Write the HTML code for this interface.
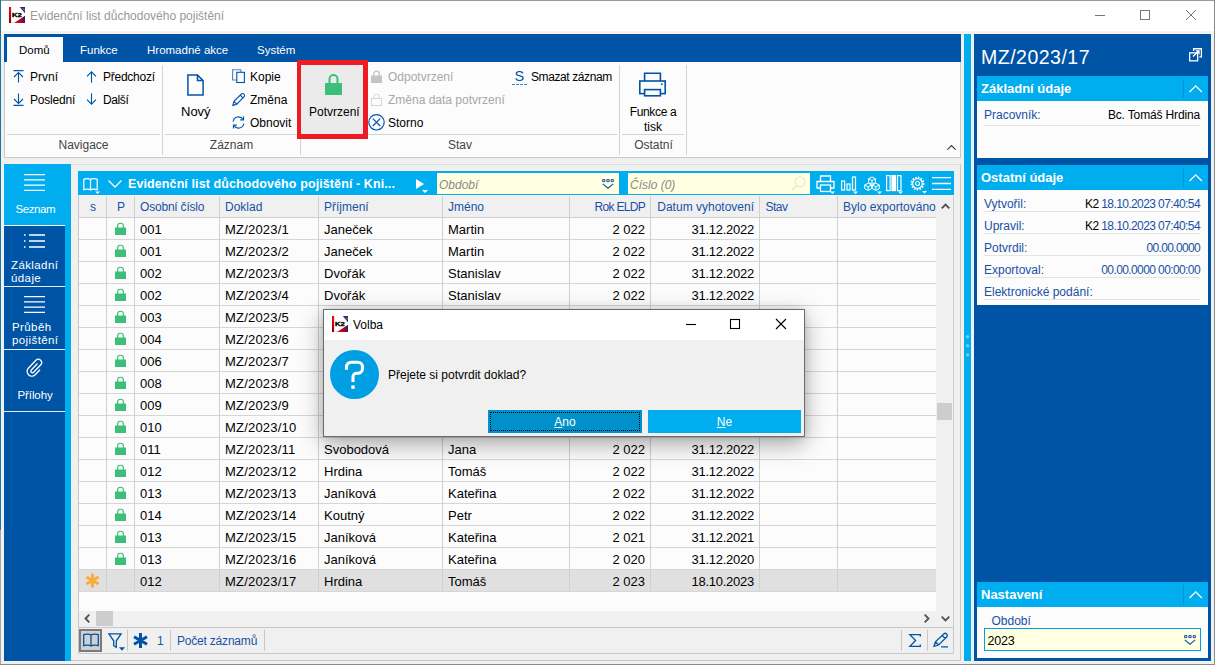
<!DOCTYPE html>
<html lang="cs"><head><meta charset="utf-8"><title>Evidenční list důchodového pojištění</title>
<style>
*{box-sizing:border-box;margin:0;padding:0}
html,body{width:1215px;height:665px;overflow:hidden;background:#f0f0f0}
body{font-family:"Liberation Sans",sans-serif;font-size:12px;color:#000;position:relative}
.a{position:absolute}
.t{position:absolute;white-space:nowrap;line-height:14px}
svg{position:absolute;overflow:visible}
/* window */
#win{position:absolute;left:0;top:0;width:1215px;height:665px;background:#f0f0f0}
#tbar{left:1px;top:1px;width:1213px;height:30px;background:#fff}
#tline{left:1px;top:31px;width:1213px;height:3px;background:#f4f3f2}
/* ribbon */
#tabs{left:4px;top:34px;width:957px;height:28px;background:#0054a6}
#tab1{left:7px;top:37px;width:56px;height:25px;background:#fcfcfc}
#rib{left:4px;top:62px;width:957px;height:96px;background:#fcfcfc;border:1px solid #c9c9c9;border-top:0}
.vs{position:absolute;width:1px;background:#d4d4d4;top:65px;height:90px}
.hs{position:absolute;height:1px;background:#d4d4d4;top:134px}
.gl{position:absolute;white-space:nowrap;line-height:14px;top:138px;color:#444;text-align:center}
.dis{color:#a8a8a8}
/* left nav */
#nav{left:4px;top:164px;width:67px;height:497px;background:#00adef}
#navd{left:4px;top:226px;width:61px;height:435px;background:#0054a6}
.nt{position:absolute;color:#fff;white-space:nowrap;line-height:13px;font-size:11.5px;letter-spacing:.4px}
/* table */
#thead{left:78px;top:171px;width:876px;height:25px;background:#00adef}
#tbl{left:78px;top:195px;width:859px;height:433px;background:#fcfcfc;border-left:1px solid #c8c8c8}
#hrow{left:79px;top:196px;width:857px;height:22px;background:#f0f0f0;border-bottom:1px solid #d0d0d0}
.h{position:absolute;top:4px;white-space:nowrap;line-height:14px;color:#1950a5;font-size:12px}
.row{position:absolute;left:79px;width:857px;height:22px;border-bottom:1px solid #d6d6d6;font-size:13px}
.row.sel{background:#e0e0e0}
.c{position:absolute;top:4px;white-space:nowrap;line-height:15px}
.c.r{text-align:right}
.lk{position:relative;top:0}
.star{color:#f7a233;font-size:15px;top:3px}
.cl{position:absolute;top:196px;width:1px;height:396px;background:#d0d0d0}
/* right panel */
#rp{left:974px;top:34px;width:237px;height:627px;background:#0054a6}
.sh{position:absolute;left:977px;width:231px;height:25px;background:#00adef}
.sb{position:absolute;left:977px;width:231px;background:#fcfcfc}
.st{position:absolute;left:4px;top:5px;color:#fff;font-weight:bold;font-size:13px;line-height:15px;white-space:nowrap}
.lb{position:absolute;left:984px;color:#1950a5;white-space:nowrap;line-height:14px}
.vl{position:absolute;right:15px;white-space:nowrap;line-height:14px;text-align:right}
.ul{position:absolute;left:984px;width:216px;height:1px;background:#e4e4e4}
/* dialog */
#dlg{left:323px;top:309px;width:482px;height:128px;background:#f0f0f0;border:1px solid #6b6b6b;box-shadow:0 7px 22px rgba(0,0,0,.34),0 0 7px rgba(0,0,0,.12)}
#dtb{left:324px;top:310px;width:480px;height:30px;background:#fff}
</style></head><body>
<div id="win">
<div class="a" style="left:0;top:0;width:1215px;height:1px;background:#9a9a9a"></div>
<div class="a" style="left:0;top:0;width:1px;height:530px;background:#1a769a"></div><div class="a" style="left:0;top:530px;width:1px;height:135px;background:#a4a4a4"></div>
<div class="a" style="left:1214px;top:0;width:1px;height:665px;background:#8a8a8a"></div>
<div class="a" style="left:0;top:664px;width:1215px;height:1px;background:#8a8a8a"></div>
<div class="a" id="tbar"></div><div class="a" id="tline"></div>
<!-- app icon -->
<svg style="left:9px;top:7px" width="16" height="16" viewBox="0 0 16 16"><defs><linearGradient id="g1a" x1="0" y1="0" x2="0" y2="1"><stop offset="0" stop-color="#ff0010"/><stop offset="1" stop-color="#8c0012"/></linearGradient><linearGradient id="g1b" x1="0" y1="0" x2="1" y2="0"><stop offset="0" stop-color="#e8001c"/><stop offset=".6" stop-color="#c00020"/><stop offset="1" stop-color="#2a2450"/></linearGradient></defs><rect width="16" height="16" fill="#fff"/><rect x="0" y="0" width="2.100" height="16" fill="url(#g1a)"/><path d="M10.800 0H16v6.200z" fill="#2c2a5a"/><path d="M13.300 1.500l2.200 0v2.600z" fill="#9aa0c4" opacity=".7"/><path d="M16 16H5l6.500-4.200L16 8.800z" fill="url(#g1b)"/><path d="M2.100 16h3.400l-1.200-1z" fill="#a8b4d8" opacity=".7"/><text x="3.100" y="9.900" font-family="Liberation Sans,sans-serif" font-size="5.800" font-weight="bold" fill="#000" textLength="9.800" lengthAdjust="spacingAndGlyphs" stroke="#000" stroke-width=".35">K2</text></svg>
<div class="t" style="left:30px;top:9px;color:#999;font-size:12px">Evidenční list důchodového pojištění</div>
<!-- window controls -->
<svg style="left:1095px;top:10px" width="110" height="12" viewBox="0 0 110 12" fill="none" stroke="#777" stroke-width="1"><path d="M0 5.5h10"/><rect x="45.500" y="0.500" width="9" height="9"/><path d="M91 0l10 10M101 0l-10 10"/></svg>

<!-- ribbon tabs -->
<div class="a" id="tabs"></div><div class="a" id="tab1"></div>
<div class="t" style="left:19px;top:43px;font-size:11.5px">Domů</div>
<div class="t" style="left:80px;top:43px;color:#fff;font-size:11.5px">Funkce</div>
<div class="t" style="left:147px;top:43px;color:#fff;font-size:11.5px">Hromadné akce</div>
<div class="t" style="left:257px;top:43px;color:#fff;font-size:11.5px">Systém</div>
<div class="a" id="rib"></div>
<!-- group separators -->
<div class="vs" style="left:162px"></div><div class="vs" style="left:300px"></div><div class="vs" style="left:619px"></div><div class="vs" style="left:686px"></div>
<div class="hs" style="left:7px;width:153px"></div><div class="hs" style="left:165px;width:133px"></div><div class="hs" style="left:303px;width:314px"></div><div class="hs" style="left:622px;width:62px"></div>
<div class="gl" style="left:7px;width:153px">Navigace</div><div class="gl" style="left:165px;width:133px">Záznam</div><div class="gl" style="left:303px;width:314px">Stav</div><div class="gl" style="left:622px;width:63px">Ostatní</div>
<!-- Navigace -->
<svg style="left:13px;top:70px" width="11" height="13" viewBox="0 0 11 13" fill="none" stroke="#0054a6" stroke-width="1.1"><path d="M0.5 .6h10M5.5 2.5v10M1 7l4.5-4.5L10 7"/></svg>
<div class="t" style="left:30px;top:70px">První</div>
<svg style="left:13px;top:93px" width="11" height="13" viewBox="0 0 11 13" fill="none" stroke="#0054a6" stroke-width="1.1"><path d="M0.5 12.4h10M5.5 .5v10M1 6l4.5 4.5L10 6"/></svg>
<div class="t" style="left:30px;top:93px;letter-spacing:-.2px">Poslední</div>
<svg style="left:86px;top:71px" width="11" height="12" viewBox="0 0 11 12" fill="none" stroke="#0054a6" stroke-width="1.1"><path d="M5.5 .8v11M1 5.3L5.5 .8 10 5.3"/></svg>
<div class="t" style="left:103px;top:70px;letter-spacing:-.25px">Předchozí</div>
<svg style="left:86px;top:93px" width="11" height="12" viewBox="0 0 11 12" fill="none" stroke="#0054a6" stroke-width="1.1"><path d="M5.5 .2v11M1 6.7l4.500 4.500L10 6.700"/></svg>
<div class="t" style="left:103px;top:93px;letter-spacing:-.4px">Další</div>
<!-- Záznam -->
<svg style="left:187px;top:73.500px" width="17" height="22" viewBox="0 0 17 22" fill="none" stroke="#0054a6" stroke-width="1.500"><path d="M.9 1h9.600l5.600 5.600v14.500H.9zM10.500 1v5.600h5.600"/></svg>
<div class="t" style="left:181px;top:105px;font-size:13px">Nový</div>
<svg style="left:232px;top:69px" width="13" height="14" viewBox="0 0 13 14" fill="none" stroke="#0054a6" stroke-width="1.100"><path d="M4.600 11H.6V.8h8.200V3" stroke="#4a86c5"/><rect x="4.800" y="3.300" width="7.600" height="10.200"/></svg>
<div class="t" style="left:250px;top:70px">Kopie</div>
<svg style="left:232px;top:93px" width="13" height="13" viewBox="0 0 13 13" fill="none" stroke="#0054a6" stroke-width="1.100"><path d="M.8 12.400l1.200-4L9.700 .8a1.900 1.900 0 0 1 2.600 2.600L4.800 11.200zM8.300 2.200l2.600 2.600M2 8.400l2.800 2.800"/></svg>
<div class="t" style="left:250px;top:93px">Změna</div>
<svg style="left:232px;top:116px" width="13" height="13" viewBox="0 0 13 13" fill="none" stroke="#0054a6" stroke-width="1.2"><path d="M1.200 5.500A5.300 5.300 0 0 1 11 3.500M11.800 7.500A5.300 5.300 0 0 1 2 9.500"/><path d="M11.500 .5v3.300H8.200M1.500 12.500V9.200h3.300"/></svg>
<div class="t" style="left:250px;top:116px">Obnovit</div>
<!-- Potvrzení -->
<div class="a" style="left:297px;top:60px;width:71px;height:79px;background:#ebebeb;border:5px solid #ed1c24;border-left-width:4.5px"></div>
<svg style="left:325px;top:74px" width="17" height="21" viewBox="0 0 17 21"><path d="M4.500 10V5a4 4 0 0 1 8 0V10" fill="none" stroke="#3cbf78" stroke-width="2"/><rect x="0" y="9" width="17" height="12" fill="#3cbf78"/></svg>
<div class="t" style="left:309px;top:105px">Potvrzení</div>
<!-- Stav -->
<svg style="left:371px;top:70px" width="11" height="13" viewBox="0 0 11 13"><path d="M2.700 6V4a2.800 2.800 0 0 1 5.600 0v2" fill="none" stroke="#c4c4c4" stroke-width="1.3"/><rect x="0" y="5.500" width="11" height="7.500" fill="#c4c4c4"/></svg>
<div class="t dis" style="left:388px;top:70px">Odpotvrzení</div>
<svg style="left:371px;top:93px" width="11" height="13" viewBox="0 0 11 13" fill="none" stroke="#d4d4d4" stroke-width="1"><path d="M2.700 6V4a2.800 2.800 0 0 1 5.600 0v2"/><rect x=".5" y="5.500" width="10" height="7"/></svg>
<div class="t dis" style="left:388px;top:93px">Změna data potvrzení</div>
<svg style="left:368px;top:114px" width="17" height="17" viewBox="0 0 17 17" fill="none" stroke="#0054a6" stroke-width="1.2"><circle cx="8.500" cy="8.300" r="7.700"/><path d="M4.800 4.600l7.400 7.400M12.200 4.600l-7.400 7.400"/></svg>
<div class="t" style="left:388px;top:116px">Storno</div>
<div class="t" style="left:514.500px;top:68px;color:#0054a6;font-size:14.500px;line-height:16px">S</div>
<div class="a" style="left:512px;top:83.500px;width:15px;height:0;border-top:1.500px dashed #3d85cc"></div>
<div class="t" style="left:531px;top:70px;letter-spacing:-.4px">Smazat záznam</div>
<!-- Ostatní -->
<svg style="left:639px;top:72px" width="27" height="25" viewBox="0 0 27 25" fill="none" stroke="#0054a6" stroke-width="1.600"><path d="M5.600 9V1.300h15.800V9"/><rect x=".8" y="9" width="25.400" height="12.600"/><rect x="5.600" y="17.600" width="15.800" height="6.200" fill="#fcfcfc"/><path d="M22 12.300h1.600"/></svg>
<div class="t" style="left:622px;width:62px;top:105px;text-align:center;letter-spacing:-.35px">Funkce a</div>
<div class="t" style="left:622px;width:62px;top:120px;text-align:center">tisk</div>
<svg style="left:946.500px;top:145.300px" width="9" height="5" viewBox="0 0 9 5" fill="none" stroke="#3c3c3c" stroke-width="1.200"><path d="M.4 4.600L4.500 .6l4.100 4"/></svg>

<!-- left nav -->
<div class="a" id="nav"></div><div class="a" id="navd"></div>
<div class="a" style="left:4px;top:225px;width:61px;height:1px;background:#fff"></div>
<div class="a" style="left:4px;top:286px;width:61px;height:1px;background:#e4eef8"></div>
<div class="a" style="left:4px;top:349px;width:61px;height:1px;background:#e4eef8"></div>
<div class="a" style="left:4px;top:411px;width:61px;height:1px;background:#e4eef8"></div>
<svg style="left:24px;top:174px" width="21" height="17" viewBox="0 0 21 17" stroke="#fff" stroke-width="1.300"><path d="M0 .7h21M0 5.900h21M0 11.100h21M0 16.300h21"/></svg>
<div class="nt" style="left:15.500px;top:203px;letter-spacing:-.4px">Seznam</div>
<svg style="left:24px;top:234px" width="21" height="14" viewBox="0 0 21 14" stroke="#fff" stroke-width="1.300"><path d="M5 1h16M5 7h16M5 13h16M0 1h1.500M0 7h1.500M0 13h1.500"/></svg>
<div class="nt" style="left:11px;top:259px">Základní</div><div class="nt" style="left:11px;top:272px">údaje</div>
<svg style="left:24px;top:296px" width="21" height="17" viewBox="0 0 21 17" stroke="#fff" stroke-width="1.300"><path d="M0 .7h21M0 5.900h21M0 11.100h21M0 16.300h21"/></svg>
<div class="nt" style="left:12px;top:321px">Průběh</div><div class="nt" style="left:12px;top:334px">pojištění</div>
<svg style="left:26px;top:358px" width="17" height="19" viewBox="0 0 17 19" fill="none" stroke="#fff" stroke-width="1.300"><path d="M11.500 5.500L5.300 12a1.600 1.600 0 0 0 2.300 2.300l7-7.300a3.300 3.300 0 0 0-4.700-4.700L2.500 10a4.700 4.700 0 0 0 6.700 6.700l4.800-5"/></svg>
<div class="nt" style="left:17.500px;top:389px;letter-spacing:-.1px">Přílohy</div>

<!-- table -->
<div class="a" style="left:71px;top:164px;width:890px;height:497px;border:1px solid #c8c8c8;border-left:0;border-top-color:#dcdcdc"></div>
<div class="a" id="thead"></div>
<div class="a" id="tbl"></div>
<div class="a" id="hrow">
<span class="h" style="left:11px">s</span><span class="h" style="left:38px">P</span><span class="h" style="left:61px;letter-spacing:-.2px">Osobní číslo</span><span class="h" style="left:146px">Doklad</span><span class="h" style="left:245px">Příjmení</span><span class="h" style="left:369px">Jméno</span><span class="h" style="right:291px;letter-spacing:-.7px">Rok ELDP</span><span class="h" style="right:182px">Datum vyhotovení</span><span class="h" style="left:686.500px;letter-spacing:-.5px">Stav</span><span class="h" style="left:764px">Bylo exportováno</span>
</div>
<div class="row" style="top:218px">
<span class="c" style="left:36px"><svg class="lk" width="11" height="13" viewBox="0 0 11 13"><path d="M2.600 6V4.100a2.900 2.900 0 0 1 5.800 0V6" fill="none" stroke="#3cbf78" stroke-width="1.150"/><rect x="0" y="5.5" width="11" height="7.5" fill="#3cbf78"/></svg></span>
<span class="c" style="left:61px">001</span><span class="c" style="left:146px;letter-spacing:.2px">MZ/2023/1</span><span class="c" style="left:245px">Janeček</span><span class="c" style="left:369px">Martin</span><span class="c r" style="right:291px">2 022</span><span class="c r" style="right:182px;letter-spacing:-.25px">31.12.2022</span>
</div>
<div class="row" style="top:240px">
<span class="c" style="left:36px"><svg class="lk" width="11" height="13" viewBox="0 0 11 13"><path d="M2.600 6V4.100a2.900 2.900 0 0 1 5.800 0V6" fill="none" stroke="#3cbf78" stroke-width="1.150"/><rect x="0" y="5.5" width="11" height="7.5" fill="#3cbf78"/></svg></span>
<span class="c" style="left:61px">001</span><span class="c" style="left:146px;letter-spacing:.2px">MZ/2023/2</span><span class="c" style="left:245px">Janeček</span><span class="c" style="left:369px">Martin</span><span class="c r" style="right:291px">2 022</span><span class="c r" style="right:182px;letter-spacing:-.25px">31.12.2022</span>
</div>
<div class="row" style="top:262px">
<span class="c" style="left:36px"><svg class="lk" width="11" height="13" viewBox="0 0 11 13"><path d="M2.600 6V4.100a2.900 2.900 0 0 1 5.800 0V6" fill="none" stroke="#3cbf78" stroke-width="1.150"/><rect x="0" y="5.5" width="11" height="7.5" fill="#3cbf78"/></svg></span>
<span class="c" style="left:61px">002</span><span class="c" style="left:146px;letter-spacing:.2px">MZ/2023/3</span><span class="c" style="left:245px">Dvořák</span><span class="c" style="left:369px">Stanislav</span><span class="c r" style="right:291px">2 022</span><span class="c r" style="right:182px;letter-spacing:-.25px">31.12.2022</span>
</div>
<div class="row" style="top:284px">
<span class="c" style="left:36px"><svg class="lk" width="11" height="13" viewBox="0 0 11 13"><path d="M2.600 6V4.100a2.900 2.900 0 0 1 5.800 0V6" fill="none" stroke="#3cbf78" stroke-width="1.150"/><rect x="0" y="5.5" width="11" height="7.5" fill="#3cbf78"/></svg></span>
<span class="c" style="left:61px">002</span><span class="c" style="left:146px;letter-spacing:.2px">MZ/2023/4</span><span class="c" style="left:245px">Dvořák</span><span class="c" style="left:369px">Stanislav</span><span class="c r" style="right:291px">2 022</span><span class="c r" style="right:182px;letter-spacing:-.25px">31.12.2022</span>
</div>
<div class="row" style="top:306px">
<span class="c" style="left:36px"><svg class="lk" width="11" height="13" viewBox="0 0 11 13"><path d="M2.600 6V4.100a2.900 2.900 0 0 1 5.800 0V6" fill="none" stroke="#3cbf78" stroke-width="1.150"/><rect x="0" y="5.5" width="11" height="7.5" fill="#3cbf78"/></svg></span>
<span class="c" style="left:61px">003</span><span class="c" style="left:146px;letter-spacing:.2px">MZ/2023/5</span><span class="c" style="left:245px"></span><span class="c" style="left:369px"></span><span class="c r" style="right:291px"></span><span class="c r" style="right:182px;letter-spacing:-.25px"></span>
</div>
<div class="row" style="top:328px">
<span class="c" style="left:36px"><svg class="lk" width="11" height="13" viewBox="0 0 11 13"><path d="M2.600 6V4.100a2.900 2.900 0 0 1 5.800 0V6" fill="none" stroke="#3cbf78" stroke-width="1.150"/><rect x="0" y="5.5" width="11" height="7.5" fill="#3cbf78"/></svg></span>
<span class="c" style="left:61px">004</span><span class="c" style="left:146px;letter-spacing:.2px">MZ/2023/6</span><span class="c" style="left:245px"></span><span class="c" style="left:369px"></span><span class="c r" style="right:291px"></span><span class="c r" style="right:182px;letter-spacing:-.25px"></span>
</div>
<div class="row" style="top:350px">
<span class="c" style="left:36px"><svg class="lk" width="11" height="13" viewBox="0 0 11 13"><path d="M2.600 6V4.100a2.900 2.900 0 0 1 5.800 0V6" fill="none" stroke="#3cbf78" stroke-width="1.150"/><rect x="0" y="5.5" width="11" height="7.5" fill="#3cbf78"/></svg></span>
<span class="c" style="left:61px">006</span><span class="c" style="left:146px;letter-spacing:.2px">MZ/2023/7</span><span class="c" style="left:245px"></span><span class="c" style="left:369px"></span><span class="c r" style="right:291px"></span><span class="c r" style="right:182px;letter-spacing:-.25px"></span>
</div>
<div class="row" style="top:372px">
<span class="c" style="left:36px"><svg class="lk" width="11" height="13" viewBox="0 0 11 13"><path d="M2.600 6V4.100a2.900 2.900 0 0 1 5.800 0V6" fill="none" stroke="#3cbf78" stroke-width="1.150"/><rect x="0" y="5.5" width="11" height="7.5" fill="#3cbf78"/></svg></span>
<span class="c" style="left:61px">008</span><span class="c" style="left:146px;letter-spacing:.2px">MZ/2023/8</span><span class="c" style="left:245px"></span><span class="c" style="left:369px"></span><span class="c r" style="right:291px"></span><span class="c r" style="right:182px;letter-spacing:-.25px"></span>
</div>
<div class="row" style="top:394px">
<span class="c" style="left:36px"><svg class="lk" width="11" height="13" viewBox="0 0 11 13"><path d="M2.600 6V4.100a2.900 2.900 0 0 1 5.800 0V6" fill="none" stroke="#3cbf78" stroke-width="1.150"/><rect x="0" y="5.5" width="11" height="7.5" fill="#3cbf78"/></svg></span>
<span class="c" style="left:61px">009</span><span class="c" style="left:146px;letter-spacing:.2px">MZ/2023/9</span><span class="c" style="left:245px"></span><span class="c" style="left:369px"></span><span class="c r" style="right:291px"></span><span class="c r" style="right:182px;letter-spacing:-.25px"></span>
</div>
<div class="row" style="top:416px">
<span class="c" style="left:36px"><svg class="lk" width="11" height="13" viewBox="0 0 11 13"><path d="M2.600 6V4.100a2.900 2.900 0 0 1 5.800 0V6" fill="none" stroke="#3cbf78" stroke-width="1.150"/><rect x="0" y="5.5" width="11" height="7.5" fill="#3cbf78"/></svg></span>
<span class="c" style="left:61px">010</span><span class="c" style="left:146px;letter-spacing:.2px">MZ/2023/10</span><span class="c" style="left:245px"></span><span class="c" style="left:369px"></span><span class="c r" style="right:291px"></span><span class="c r" style="right:182px;letter-spacing:-.25px"></span>
</div>
<div class="row" style="top:438px">
<span class="c" style="left:36px"><svg class="lk" width="11" height="13" viewBox="0 0 11 13"><path d="M2.600 6V4.100a2.900 2.900 0 0 1 5.800 0V6" fill="none" stroke="#3cbf78" stroke-width="1.150"/><rect x="0" y="5.5" width="11" height="7.5" fill="#3cbf78"/></svg></span>
<span class="c" style="left:61px">011</span><span class="c" style="left:146px;letter-spacing:.2px">MZ/2023/11</span><span class="c" style="left:245px">Svobodová</span><span class="c" style="left:369px">Jana</span><span class="c r" style="right:291px">2 022</span><span class="c r" style="right:182px;letter-spacing:-.25px">31.12.2022</span>
</div>
<div class="row" style="top:460px">
<span class="c" style="left:36px"><svg class="lk" width="11" height="13" viewBox="0 0 11 13"><path d="M2.600 6V4.100a2.900 2.900 0 0 1 5.800 0V6" fill="none" stroke="#3cbf78" stroke-width="1.150"/><rect x="0" y="5.5" width="11" height="7.5" fill="#3cbf78"/></svg></span>
<span class="c" style="left:61px">012</span><span class="c" style="left:146px;letter-spacing:.2px">MZ/2023/12</span><span class="c" style="left:245px">Hrdina</span><span class="c" style="left:369px">Tomáš</span><span class="c r" style="right:291px">2 022</span><span class="c r" style="right:182px;letter-spacing:-.25px">31.12.2022</span>
</div>
<div class="row" style="top:482px">
<span class="c" style="left:36px"><svg class="lk" width="11" height="13" viewBox="0 0 11 13"><path d="M2.600 6V4.100a2.900 2.900 0 0 1 5.800 0V6" fill="none" stroke="#3cbf78" stroke-width="1.150"/><rect x="0" y="5.5" width="11" height="7.5" fill="#3cbf78"/></svg></span>
<span class="c" style="left:61px">013</span><span class="c" style="left:146px;letter-spacing:.2px">MZ/2023/13</span><span class="c" style="left:245px">Janíková</span><span class="c" style="left:369px">Kateřina</span><span class="c r" style="right:291px">2 022</span><span class="c r" style="right:182px;letter-spacing:-.25px">31.12.2022</span>
</div>
<div class="row" style="top:504px">
<span class="c" style="left:36px"><svg class="lk" width="11" height="13" viewBox="0 0 11 13"><path d="M2.600 6V4.100a2.900 2.900 0 0 1 5.800 0V6" fill="none" stroke="#3cbf78" stroke-width="1.150"/><rect x="0" y="5.5" width="11" height="7.5" fill="#3cbf78"/></svg></span>
<span class="c" style="left:61px">014</span><span class="c" style="left:146px;letter-spacing:.2px">MZ/2023/14</span><span class="c" style="left:245px">Koutný</span><span class="c" style="left:369px">Petr</span><span class="c r" style="right:291px">2 022</span><span class="c r" style="right:182px;letter-spacing:-.25px">31.12.2022</span>
</div>
<div class="row" style="top:526px">
<span class="c" style="left:36px"><svg class="lk" width="11" height="13" viewBox="0 0 11 13"><path d="M2.600 6V4.100a2.900 2.900 0 0 1 5.800 0V6" fill="none" stroke="#3cbf78" stroke-width="1.150"/><rect x="0" y="5.5" width="11" height="7.5" fill="#3cbf78"/></svg></span>
<span class="c" style="left:61px">013</span><span class="c" style="left:146px;letter-spacing:.2px">MZ/2023/15</span><span class="c" style="left:245px">Janíková</span><span class="c" style="left:369px">Kateřina</span><span class="c r" style="right:291px">2 021</span><span class="c r" style="right:182px;letter-spacing:-.25px">31.12.2021</span>
</div>
<div class="row" style="top:548px">
<span class="c" style="left:36px"><svg class="lk" width="11" height="13" viewBox="0 0 11 13"><path d="M2.600 6V4.100a2.900 2.900 0 0 1 5.800 0V6" fill="none" stroke="#3cbf78" stroke-width="1.150"/><rect x="0" y="5.5" width="11" height="7.5" fill="#3cbf78"/></svg></span>
<span class="c" style="left:61px">013</span><span class="c" style="left:146px;letter-spacing:.2px">MZ/2023/16</span><span class="c" style="left:245px">Janíková</span><span class="c" style="left:369px">Kateřina</span><span class="c r" style="right:291px">2 020</span><span class="c r" style="right:182px;letter-spacing:-.25px">31.12.2020</span>
</div>
<div class="row sel" style="top:570px">
<svg style="left:6px;top:3px" width="15" height="15" viewBox="0 0 15 15" stroke="#fbab3c" stroke-width="2.900"><path d="M7.500 .5v14M1.400 4l12.200 7M13.600 4L1.400 11"/></svg>
<span class="c" style="left:61px">012</span><span class="c" style="left:146px;letter-spacing:.2px">MZ/2023/17</span><span class="c" style="left:245px">Hrdina</span><span class="c" style="left:369px">Tomáš</span><span class="c r" style="right:291px">2 023</span><span class="c r" style="right:182px;letter-spacing:-.25px">18.10.2023</span>
</div>
<div class="cl" style="left:106px"></div><div class="cl" style="left:134px"></div><div class="cl" style="left:219px"></div><div class="cl" style="left:318px"></div><div class="cl" style="left:442px"></div><div class="cl" style="left:569px"></div><div class="cl" style="left:650px"></div><div class="cl" style="left:759px"></div><div class="cl" style="left:837px"></div>

<!-- header bar content -->
<svg style="left:83px;top:178px" width="20" height="17" viewBox="0 0 20 17" fill="none" stroke="#fff" stroke-width="1.200"><path d="M7.500 1.500v10.500M7.500 1.500C6 .4 2.500 .4.800 1.300v10.500c1.700-.9 5.200-.9 6.700.2c1.500-1.100 5-1.100 6.700-.2V1.300C12.500.4 9 .4 7.500 1.500z"/><path d="M12 13.500h5l-2.500 2.500z" fill="#fff" stroke="none"/></svg>
<svg style="left:108px;top:180px" width="14" height="8" viewBox="0 0 14 8" fill="none" stroke="#fff" stroke-width="1.300"><path d="M.5 .5L7 7l6.500-6.500"/></svg>
<div class="t" style="left:128px;top:177px;color:#fff;font-weight:bold;font-size:12.5px;letter-spacing:.1px">Evidenční list důchodového pojištění - Kni...</div>
<svg style="left:415px;top:178px" width="14" height="15" viewBox="0 0 14 15" fill="#fff"><path d="M1 1l8 5-8 5zM7 12h6l-3 3z"/></svg>
<div class="a" style="left:437px;top:173px;width:182px;height:21px;background:#ffffe1"></div>
<div class="t" style="left:439px;top:178px;color:#8a8a8a;font-style:italic">Období</div>
<svg style="left:602px;top:179px" width="12" height="10" viewBox="0 0 12 10" fill="none" stroke="#1950a5" stroke-width="1.100"><path d="M.6 .6h2.300v2h-2.300zM4.850 .6h2.300v2h-2.300zM9.100 .6h2.300v2h-2.300z" stroke-width="1"/><path d="M.8 4.800L6 9.200l5.200-4.400"/></svg>
<div class="a" style="left:628px;top:173px;width:182px;height:21px;background:#ffffe1"></div>
<div class="t" style="left:630px;top:178px;color:#8a8a8a;font-style:italic">Číslo (0)</div>
<svg style="left:791px;top:176px" width="15" height="15" viewBox="0 0 15 15" fill="none" stroke="#e6e6d0" stroke-width="1.200"><circle cx="9" cy="6" r="5"/><path d="M5.500 9.500L1 14"/></svg>
<!-- right icons -->
<svg style="left:816px;top:175px" width="20" height="19" viewBox="0 0 20 19" fill="none" stroke="#fff" stroke-width="1.300"><path d="M4.500 6.500V1h10v5.500M4.500 13H1V6.500h17V13h-3.500"/><rect x="4.500" y="10" width="10" height="6.500"/><path d="M14 16.500h5l-2.500 2.500z" fill="#fff" stroke="none"/></svg>
<svg style="left:841px;top:176px" width="18" height="18" viewBox="0 0 18 18" fill="none" stroke="#fff" stroke-width="1.200"><rect x=".6" y="5" width="3" height="9"/><rect x="6" y="8" width="3" height="6"/><rect x="11.500" y="1" width="3" height="13"/><path d="M12 15.500h5l-2.500 2.500z" fill="#fff" stroke="none"/></svg>
<svg style="left:864px;top:176px" width="18" height="18" viewBox="0 0 18 18" fill="none" stroke="#fff" stroke-width="1"><path d="M8 1l3.500 1.800v3.600L8 8.200 4.500 6.400V2.800zM4.200 7.200l3.500 1.800v3.600l-3.500 1.800-3.500-1.800V9zM11.800 7.200l3.500 1.800v3.600l-3.500 1.800-3.500-1.800V9zM4.500 2.800L8 4.600l3.500-1.800M8 4.600v3.600M.7 9l3.500 1.800L7.700 9M4.200 10.800v3.600M8.300 9l3.500 1.800L15.300 9M11.800 10.800v3.600"/><path d="M13 15.500h5l-2.500 2.500z" fill="#fff" stroke="none"/></svg>
<svg style="left:886px;top:175px" width="18" height="19" viewBox="0 0 18 19" fill="none" stroke="#fff" stroke-width="1.200"><rect x=".6" y=".6" width="3.500" height="15"/><rect x="6" y=".6" width="3.500" height="15" fill="#fff"/><rect x="11.500" y=".6" width="3.500" height="15"/><path d="M12 16.500h5l-2.500 2.500z" fill="#fff" stroke="none"/></svg>
<svg style="left:910px;top:176px" width="18" height="18" viewBox="0 0 18 18" fill="none" stroke="#fff"><circle cx="7.500" cy="7.500" r="5.800" stroke-width="2.200" stroke-dasharray="1.500 1.200"/><circle cx="7.500" cy="7.500" r="4.800" stroke-width="1.100"/><circle cx="7.500" cy="7.500" r="2" stroke-width="1.200"/><path d="M12 15h5l-2.500 2.500z" fill="#fff" stroke="none"/></svg>
<div class="a" style="left:929px;top:174px;width:1px;height:19px;background:#0095d0"></div>
<svg style="left:932px;top:177px" width="19" height="13" viewBox="0 0 19 13" stroke="#fff" stroke-width="1.300"><path d="M0 .7h19M0 6.500h19M0 12.300h19"/></svg>
<!-- vertical scrollbar -->
<div class="a" style="left:936px;top:195px;width:18px;height:432px;background:#f0f0f0"></div>
<svg style="left:941px;top:203px" width="9" height="6" viewBox="0 0 9 6" fill="none" stroke="#505050" stroke-width="1.800"><path d="M.7 5.300L4.500 1.500l3.800 3.800"/></svg>
<div class="a" style="left:937px;top:403px;width:15px;height:17px;background:#cdcdcd"></div>
<svg style="left:940.500px;top:616px" width="9" height="6" viewBox="0 0 9 6" fill="none" stroke="#505050" stroke-width="1.800"><path d="M.7 .7L4.500 4.500 8.300 .7"/></svg>
<div class="a" style="left:953px;top:196px;width:1px;height:458px;background:#cccccc"></div>
<!-- horizontal scrollbar -->
<div class="a" style="left:79px;top:611px;width:857px;height:16px;background:#f0f0f0"></div>
<svg style="left:84px;top:614px" width="6" height="9" viewBox="0 0 6 9" fill="none" stroke="#505050" stroke-width="1.800"><path d="M5.300 .7L1.500 4.500l3.800 3.800"/></svg>
<div class="a" style="left:96px;top:611px;width:17px;height:15px;background:#cdcdcd"></div>
<svg style="left:924px;top:614px" width="6" height="9" viewBox="0 0 6 9" fill="none" stroke="#505050" stroke-width="1.800"><path d="M.7 .7L4.500 4.500.7 8.300"/></svg>
<!-- status bar -->
<div class="a" style="left:78px;top:627px;width:876px;height:27px;background:#f0f0f0;border:1px solid #c8c8c8"></div>
<div class="a" style="left:79px;top:629px;width:23px;height:23px;background:#d0d0d0;border:2px solid #7a7a7a"></div>
<svg style="left:83px;top:633px" width="16" height="15" viewBox="0 0 16 15" fill="none" stroke="#0054a6" stroke-width="1.300"><path d="M8 2v11M8 2C6.500.8 2.500.8.700 1.600v11c1.800-.8 5.800-.8 7.300.4c1.500-1.200 5.500-1.200 7.300-.4v-11C13.500.8 9.500.8 8 2z"/></svg>
<svg style="left:107.500px;top:633px" width="18" height="18" viewBox="0 0 18 18" fill="none" stroke="#0054a6" stroke-width="1.300"><path d="M.9 .8h12.200L8.300 7.800v6.600l-2.600-1.700V7.800z"/><path d="M11 14.200h6l-3 3.600z" fill="#0054a6" stroke="none"/></svg>
<div class="a" style="left:127px;top:630px;width:1px;height:21px;background:#c8c8c8"></div>
<svg style="left:133px;top:633px" width="15" height="15" viewBox="0 0 15 15" stroke="#0054a6" stroke-width="3" stroke-linecap="butt"><path d="M7.500 0v15M1 3.700l13 7.600M14 3.700L1 11.300"/></svg>
<div class="t" style="left:157px;top:634px;color:#1950a5">1</div>
<div class="a" style="left:170px;top:630px;width:1px;height:21px;background:#c8c8c8"></div>
<div class="t" style="left:177px;top:634px;color:#1950a5;letter-spacing:-.2px">Počet záznamů</div>
<div class="a" style="left:264px;top:630px;width:1px;height:21px;background:#c8c8c8"></div>
<div class="a" style="left:901px;top:630px;width:1px;height:21px;background:#c8c8c8"></div>
<svg style="left:908.500px;top:634px" width="12" height="13" viewBox="0 0 12 13" fill="none" stroke="#0054a6" stroke-width="1.300"><path d="M11.300 2.600V.7H.9l5.700 5.800-5.700 5.800h10.400v-1.900"/></svg>
<div class="a" style="left:927px;top:630px;width:1px;height:21px;background:#c8c8c8"></div>
<svg style="left:933px;top:633px" width="16" height="15" viewBox="0 0 16 15" fill="none" stroke="#0054a6" stroke-width="1.250"><path d="M1 13.300l1.400-4.500L10.700 1a2.100 2.100 0 0 1 3 3L5.500 12zM9.200 2.500l3 3M2.400 8.800l3.100 3.200M8 13.800h7"/></svg>

<!-- right panel -->
<div class="a" style="left:964px;top:34px;width:7px;height:627px;background:#00adef"></div>
<div class="a" id="rp"></div>
<svg style="left:964px;top:333px" width="7" height="26" viewBox="0 0 7 26" fill="#63cdf6"><circle cx="3.600" cy="3.800" r="1.700"/><circle cx="3.600" cy="12.800" r="1.700"/><circle cx="3.600" cy="21.800" r="1.700"/></svg>
<div class="t" style="left:981px;top:46px;color:#fff;font-size:19.5px;line-height:22px;letter-spacing:.5px">MZ/2023/17</div>
<svg style="left:1188px;top:48px" width="15" height="14" viewBox="0 0 15 14" fill="none" stroke="#fff" stroke-width="1.300"><rect x="1.650" y="4.850" width="8" height="8"/><path d="M5.600 2.900V.75h7.800v8.100h-2.100"/><path d="M5 8.600l5.600-5.600" stroke-width="1.400"/><path d="M7.300 2.300h4.400v4.400z" fill="#fff" stroke="none"/></svg>
<!-- Základní údaje -->
<div class="sh" style="top:76px"><span class="st">Základní údaje</span></div>
<div class="sb" style="top:101px;height:57px"></div>
<div class="a" style="left:1183px;top:79px;width:1px;height:19px;background:#0095d0"></div>
<svg style="left:1188.700px;top:84.700px" width="14" height="8" viewBox="0 0 14 8" fill="none" stroke="#fff" stroke-width="1.300"><path d="M.5 7L6.700 .8l6.200 6.200"/></svg>
<div class="lb" style="top:108px">Pracovník:</div><div class="vl" style="top:108px;letter-spacing:-.15px">Bc. Tomáš Hrdina</div>
<div class="ul" style="top:125px"></div>
<!-- Ostatní údaje -->
<div class="sh" style="top:165px"><span class="st">Ostatní údaje</span></div>
<div class="sb" style="top:190px;height:115px"></div>
<div class="a" style="left:1183px;top:168px;width:1px;height:19px;background:#0095d0"></div>
<svg style="left:1188.700px;top:173.700px" width="14" height="8" viewBox="0 0 14 8" fill="none" stroke="#fff" stroke-width="1.300"><path d="M.5 7L6.700 .8l6.200 6.200"/></svg>
<div class="lb" style="top:197px">Vytvořil:</div><div class="vl" style="top:197px;letter-spacing:-.6px">K2 <span style="color:#1950a5">18.10.2023 07:40:54</span></div><div class="ul" style="top:211px"></div>
<div class="lb" style="top:219px">Upravil:</div><div class="vl" style="top:219px;letter-spacing:-.6px">K2 <span style="color:#1950a5">18.10.2023 07:40:54</span></div><div class="ul" style="top:233px"></div>
<div class="lb" style="top:241px">Potvrdil:</div><div class="vl" style="top:241px;color:#1950a5;letter-spacing:-.65px">00.00.0000</div><div class="ul" style="top:255px"></div>
<div class="lb" style="top:263px">Exportoval:</div><div class="vl" style="top:263px;color:#1950a5;letter-spacing:-.6px">00.00.0000 00:00:00</div><div class="ul" style="top:277px"></div>
<div class="lb" style="top:285px">Elektronické podání:</div><div class="ul" style="top:299px"></div>
<!-- Nastavení -->
<div class="sh" style="top:582px"><span class="st">Nastavení</span></div>
<div class="sb" style="top:607px;height:51px"></div>
<div class="a" style="left:1183px;top:585px;width:1px;height:19px;background:#0095d0"></div>
<svg style="left:1188.700px;top:590.700px" width="14" height="8" viewBox="0 0 14 8" fill="none" stroke="#fff" stroke-width="1.300"><path d="M.5 7L6.700 .8l6.200 6.200"/></svg>
<div class="lb" style="left:991.500px;top:614px">Období</div>
<div class="a" style="left:984px;top:628px;width:217px;height:23px;background:#ffffe1;border:1px solid #00a0e4"></div>
<div class="t" style="left:987.500px;top:634px;font-size:12.500px;letter-spacing:-.2px">2023</div>
<svg style="left:1184px;top:635px" width="12" height="10" viewBox="0 0 12 10" fill="none" stroke="#1950a5" stroke-width="1.100"><path d="M.6 .6h2.300v2h-2.300zM4.850 .6h2.300v2h-2.300zM9.100 .6h2.300v2h-2.300z" stroke-width="1"/><path d="M.8 4.800L6 9.200l5.200-4.400"/></svg>

<!-- dialog -->
<div class="a" id="dlg"></div><div class="a" id="dtb"></div>
<svg style="left:332px;top:316px" width="16" height="16" viewBox="0 0 16 16"><defs><linearGradient id="g2a" x1="0" y1="0" x2="0" y2="1"><stop offset="0" stop-color="#ff0010"/><stop offset="1" stop-color="#8c0012"/></linearGradient><linearGradient id="g2b" x1="0" y1="0" x2="1" y2="0"><stop offset="0" stop-color="#e8001c"/><stop offset=".6" stop-color="#c00020"/><stop offset="1" stop-color="#2a2450"/></linearGradient></defs><rect width="16" height="16" fill="#fff"/><rect x="0" y="0" width="2.100" height="16" fill="url(#g2a)"/><path d="M10.800 0H16v6.200z" fill="#2c2a5a"/><path d="M13.300 1.500l2.200 0v2.600z" fill="#9aa0c4" opacity=".7"/><path d="M16 16H5l6.500-4.200L16 8.800z" fill="url(#g2b)"/><path d="M2.100 16h3.400l-1.200-1z" fill="#a8b4d8" opacity=".7"/><text x="3.100" y="9.900" font-family="Liberation Sans,sans-serif" font-size="5.800" font-weight="bold" fill="#000" textLength="9.800" lengthAdjust="spacingAndGlyphs" stroke="#000" stroke-width=".35">K2</text></svg>
<div class="t" style="left:353px;top:318px">Volba</div>
<svg style="left:686px;top:319px" width="101" height="11" viewBox="0 0 101 11" fill="none" stroke="#000" stroke-width="1.100"><path d="M0 5.500h10"/><rect x="44.500" y=".5" width="9" height="9"/><path d="M90 0l10 10M100 0L90 10"/></svg>
<div class="a" style="left:330px;top:350px;width:49px;height:49px;border-radius:50%;background:#009fe3"></div>
<svg style="left:343px;top:359px" width="24" height="32" viewBox="0 0 24 32" fill="none" stroke="#fff" stroke-width="3.100"><path d="M3.500 10.800V8a4.700 4.700 0 0 1 4.700-4.700h6.500a4.800 4.800 0 0 1 4.800 4.800v1.400a4.800 4.800 0 0 1-4.800 4.800h-1.200a3.500 3.500 0 0 0-3.500 3.500V23"/><path d="M10 26.400v3.400" stroke-width="3.400"/></svg>
<div class="t" style="left:388px;top:368px">Přejete si potvrdit doklad?</div>
<div class="a" style="left:488px;top:410px;width:154px;height:23px;background:#0091ca"></div>
<div class="a" style="left:490px;top:412px;width:150px;height:19px;border:1px dotted #fff;outline:1px dotted #000;outline-offset:-1px"></div>
<div class="t" style="left:488px;width:154px;top:415px;color:#fff;text-align:center"><u>A</u>no</div>
<div class="a" style="left:648px;top:410px;width:153px;height:23px;background:#00adef"></div>
<div class="t" style="left:648px;width:153px;top:415px;color:#fff;text-align:center"><u>N</u>e</div>

</div>
</body></html>
